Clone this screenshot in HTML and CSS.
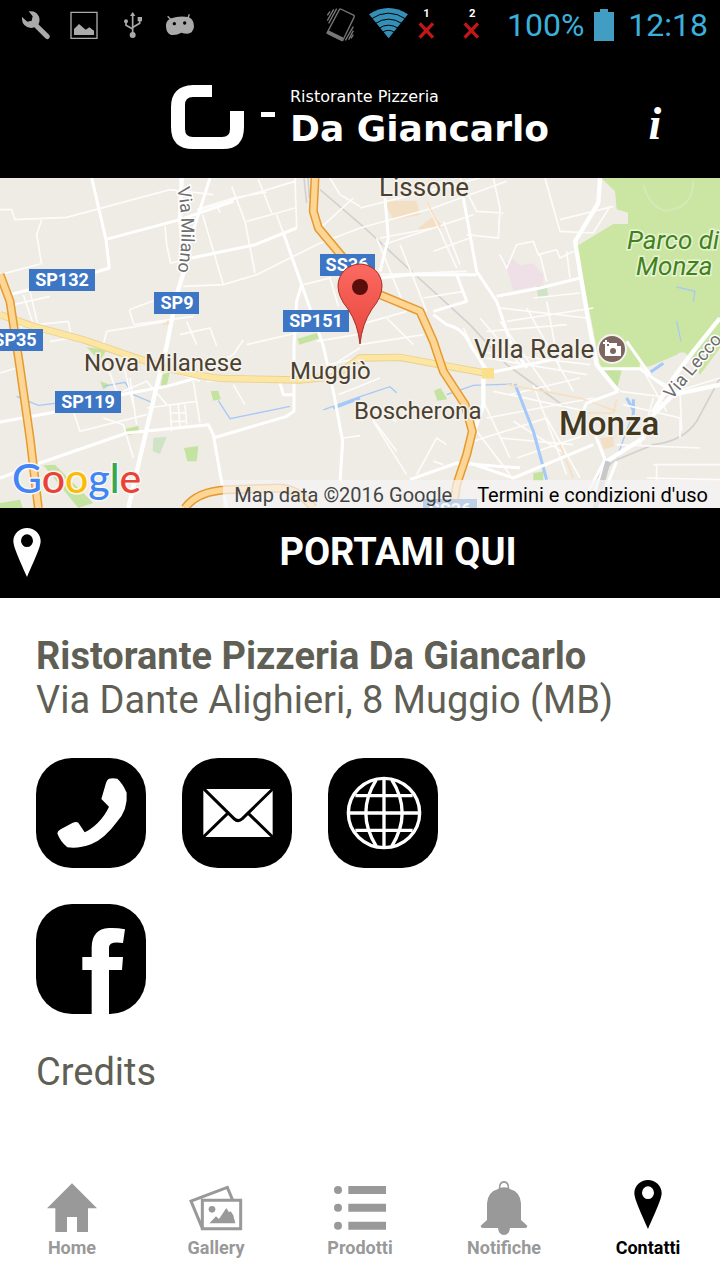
FILE: index.html
```html
<!DOCTYPE html>
<html lang="it">
<head>
    <meta charset="UTF-8">
    <meta name="viewport" content="width=device-width, initial-scale=1.0">
    <title>Da Giancarlo - Contatti</title>
    <link rel="stylesheet" href="styles.css">
</head>
<body>
    <div class="status-bar">
        <div class="status-icons">
            <svg class="status-left" viewBox="36 0 144 150">
                <path d="M86 34Q108 31 117 50Q121 63 115 73L148 105Q152 112 145 117Q138 119 133 112L103 82Q86 88 73 75Q65 66 66 51L82 65L95 62L98 49Z"/>
            </svg>
            <svg class="status-left" viewBox="180 0 144 150">
                <path d="M213 37H291V115H213Z" fill="none" stroke="#aaa" stroke-width="4"/>
                <path d="M222 105V87L237 72L257 89L268 82L282 92V105Z"/>
            </svg>
            <svg class="status-left" viewBox="324 0 144 150">
                <path d="M398 40V105M378 66V76L397 86M419 58V70L399 82" fill="none" stroke="#aaa" stroke-width="5"/>
                <path d="M398 36L406 48H390ZM413 51H426V64H413Z"/>
                <circle cx="378" cy="64" r="6"/>
                <circle cx="398" cy="105" r="9"/>
            </svg>
            <svg class="status-left" viewBox="468 0 144 150">
                <path d="M503 49L513 59M568 43L563 56" fill="none" stroke="#aaa" stroke-width="4"/>
                <path d="M498 80Q497 60 514 55Q540 46 567 52Q582 60 582 80Q580 98 563 101Q552 101 544 98Q530 107 514 105Q499 100 498 80Z"/>
                <circle cx="523" cy="71" r="5" fill="#000"/>
                <circle cx="554" cy="69" r="5" fill="#000"/>
            </svg>
        </div>
        <div class="status-icons">
            <svg class="status-right" viewBox="27 0 135 150">
                <path d="M92 27L132 46Q134 48 132 52L98 122L51 99L88 29Q90 26 92 27Z" fill="none" stroke="#777" stroke-width="4"/>
                <path d="M55 91L101 113L96 124L50 101Z" fill="#777"/>
                <path d="M60 34L52 46M71 28L52 62M80 26L56 70M130 80L106 121M130 92L116 119M130 104L123 115" fill="none" stroke="#777" stroke-width="4"/>
            </svg>
            <svg class="status-right" viewBox="162 0 135 150">
                <path d="M177 43Q235 5 294 43L236 115Z" fill="#3590b8"/>
                <path d="M183 57Q235 22 288 57M195 71Q235 44 277 71M207 85Q235 66 265 85M217 97Q235 85 254 97" fill="none" stroke="#000" stroke-width="3"/>
            </svg>
            <svg class="status-right" viewBox="297 0 135 150">
                <text x="340" y="50" class="sim">1</text>
                <path d="M329 70L369 113M369 70L329 113" class="no-signal"/>
            </svg>
            <svg class="status-right" viewBox="432 0 135 150">
                <text x="477" y="50" class="sim">2</text>
                <path d="M464 70L504 113M504 70L464 113" class="no-signal"/>
            </svg>
            <span class="battery-text">100%</span>
            <svg class="battery" viewBox="0 0 20 32">
                <path d="M6 0H14V3H20V32H0V3H6Z"/>
            </svg>
            <span class="clock">12:18</span>
        </div>
    </div>

    <header class="header">
        <div class="logo">
            <svg class="logo-mark" viewBox="0 0 105 64">
                <path d="M41 0H22Q0 1 0 22V42Q0 64 22 64H52Q73 64 73 42V26H59V44Q59 52 51 52H22Q14 52 14 44V20Q14 12 22 12H41Z"/>
                <path d="M90 27H104V32H90Z"/>
            </svg>
            <div class="logo-text">
                <span class="logo-small">Ristorante Pizzeria</span>
                <span class="logo-name">Da Giancarlo</span>
            </div>
        </div>
        <button class="info-button" type="button" aria-label="Info">i</button>
    </header>

    <main>
        <div class="map">
            <svg class="map-canvas" viewBox="0 0 720 330" preserveAspectRatio="xMidYMid slice">
                <!-- Terrain and roads are drawn at three times the map scale -->
                <g transform="scale(.33333)">
                    <!-- Parks and areas -->
                    <path d="M1804 0H2160V510L2100 590Q2060 500 2030 530L1950 565L1860 575L1850 630L1800 560L1730 205L1840 138H1884V104L1850 94L1845 40Z" class="park"/>
                    <path d="M892 482L955 464L962 480L898 500ZM376 752L415 744L418 764L380 773ZM552 810L595 804L590 850L562 850ZM632 640L655 638L662 664L640 668ZM1302 638L1322 630L1342 664L1312 668ZM130 862L165 860L280 975L235 990ZM488 590L510 580L500 625L482 630ZM260 508L320 515L300 550ZM0 975L60 965L68 990H0ZM300 610L330 620L310 635ZM1600 886L1630 880L1630 910H1600ZM1800 576L1866 574L1852 628Z" class="green"/>
                    <path d="M460 780L500 776L480 828L458 820ZM1610 325L1640 322L1645 355L1614 362Z" class="green-pale"/>
                    <path d="M1516 255L1540 243L1560 262L1600 256L1630 290L1630 320L1540 338Z" class="pink"/>
                    <path d="M1150 70L1250 68L1260 110L1180 125ZM1255 150L1300 115L1330 145L1260 162ZM1800 780L1840 775L1842 805L1812 815ZM490 425H510V440H490Z" class="town"/>
                    <path d="M1930 20Q1950 90 2000 98Q2080 90 2080 10" class="park-path"/>

                    <!-- Water -->
                    <path d="M50 655L115 682L200 672M310 625L375 613L400 650L460 675M655 668L690 722L870 685M970 696L1080 656L1170 626L1190 644M1340 650L1420 622L1535 618" class="water-thin"/>
                    <path d="M1000 690L1080 660M1880 660L1902 700M1900 664L1900 710M1952 582L1990 556" class="water"/>
                    <path d="M2030 327L2085 340L2080 370M2030 430L2043 490M1905 690L1850 840" class="water-thin"/>

                    <!-- Railways -->
                    <path d="M960 35L1088 144L1240 285L1410 440L1520 560L1700 690M2160 600L2090 730Q2050 790 1960 800L1840 850L1770 920" class="rail"/>
                    <path d="M912 0L920 75M924 0L928 60" class="rail"/>

                    <!-- Minor streets -->
                    <g class="street">
                        <path d="M0 95H35L45 125L200 118L510 35L640 50M125 125L110 170L125 260M0 290L120 258M495 145L500 200L512 256L575 240M608 110L670 320L550 325M670 320L770 290L950 200L1080 150"/>
                        <path d="M695 25L735 130L765 285M775 5L815 105M590 95L700 60L800 42M740 130L885 90M600 95L885 10M885 0L890 150M650 80L660 105M830 110L850 165"/>
                        <path d="M388 395L460 368M388 395L402 440L580 415M320 460L310 500L400 560M320 460L500 430M560 430L590 500M540 470L630 450L650 504M620 610L750 595M40 380L150 355M90 340L120 470M70 350L105 455M60 445L205 430L215 480L150 490"/>
                        <path d="M0 585L50 570M220 700L240 760L440 710M370 560L405 700M390 600L410 740M370 640L440 610L500 680M320 560L350 640M310 720L370 740L400 840M430 550L600 610M580 610L600 735M510 680L515 760M535 680L540 750M555 680L560 740M440 690L590 670M510 705H555M510 730H555M700 620L735 680M640 560L700 530L730 486"/>
                        <path d="M910 320L990 300L1015 385M985 560L1080 540M1000 560L1080 510M1015 650L1140 600M1030 780L1080 773M740 500L890 465M950 490L1070 470M990 0L1020 50L1080 85M950 160L1060 60"/>
                        <path d="M1080 90L1240 50L1440 0M1080 150L1300 90L1520 10M1150 200L1420 110M1140 180L1300 150M1280 70L1370 270M1200 200L1280 400M1130 180L1220 400M1380 0L1430 100L1510 105M1480 0L1500 90L1495 180L1400 170M1330 130L1380 260M1410 180L1300 220M1140 290L1400 280M1270 360L1390 340"/>
                        <path d="M1500 230L1520 270L1550 200L1600 190L1615 230L1670 215L1680 240L1720 220M1635 0L1680 160L1780 165L1830 85M1680 125L1840 85M1620 230L1640 310M1700 220L1710 300M1600 360L1740 345M1500 390L1760 420M1520 430L1780 390"/>
                        <path d="M1080 440L1220 400M1080 500L1270 470M1160 420L1240 500M1390 450L1460 590M1440 420L1560 560M1500 430L1650 640M1580 390L1720 640M1640 370L1680 580M1460 460L1700 440M1430 520L1770 560M1460 540L1760 590"/>
                        <path d="M1480 640L1760 700M1460 720L1780 660M1420 790L1640 720M1400 720L1530 890M1450 670L1530 840M1600 620L1700 890M1640 720L1740 900M1540 730L1700 830M1530 650L1740 600M1500 780L1720 800M1550 840L1760 770M1100 700L1190 820M1120 730L1220 890M1250 890L1310 780L1340 800M1300 850L1330 860M1080 680L1190 730"/>
                        <path d="M1860 640L1980 655L2160 600M1870 680L2040 720V780M1960 660L1920 800M1960 860H2160M1970 860V910M1940 900L2160 905M1920 560L2000 700M2040 640L2045 760M1960 600L2000 620M1850 800L2100 810"/>
                    </g>
                    <path d="M1545 618L1600 760L1640 905" class="water"/>
                    <path d="M1520 620L1740 660L1850 700M1850 665L1840 705H1750M1280 70L1320 150M1680 800L1720 900" class="street-orange"/>

                    <!-- Main streets -->
                    <g class="road">
                        <path d="M275 0L318 185L328 270L270 288L30 350M318 184L540 125L700 70M630 0L595 110L570 190M575 240L765 200L890 150M850 165L905 320L970 504L1000 640L1028 790L1020 910M905 320L890 370L882 500V700L860 715L640 780"/>
                        <path d="M0 732L180 700L310 660L500 625L590 600M0 900L120 855L380 765L625 740L640 770L668 930L680 990M840 615L850 650H880"/>
                        <path d="M1155 60L1165 180L1140 280M1390 60L1430 280L1490 370L1530 490L1580 570M1140 300L1230 290H1430M1490 355L1620 330L1740 300M1370 290L1400 370L1300 400"/>
                        <path d="M1300 410L1340 440Q1390 450 1410 500L1450 560L1470 590M1230 905L1370 855L1560 870M1410 855L1540 900L1780 800M1460 586L1680 540M1800 572H1920L2000 630M1855 640L1760 675L1740 720M1770 730L1815 845L1760 950M1850 850L1810 950M1880 490L1950 590"/>
                    </g>
                    <path d="M545 0L540 120L555 270L530 350L500 504L465 646L385 990" class="avenue"/>
                    <path d="M1800 0L1795 75L1725 190L1760 400L1790 560L1855 640" class="avenue"/>
                    <path d="M2160 620L2020 650L1950 720L1930 780L1820 850L1780 960M2160 420L2080 520L2020 600L1960 700M1450 600L1450 680L1400 820" class="avenue"/>
                    <path d="M1824 850L1785 990" stroke="#c8c8c8" stroke-width="16" fill="none"/>

                    <!-- Yellow roads -->
                    <path d="M0 410L100 445L250 485L380 530L500 570Q620 600 680 602L900 606L1000 596L1080 540L1200 538L1460 586" class="yellow-edge"/>
                    <path d="M0 410L100 445L250 485L380 530L500 570Q620 600 680 602L900 606L1000 596L1080 540L1200 538L1460 586" class="yellow"/>
                    <path d="M1446 570H1482V602H1446Z" fill="#fbe08c"/>

                    <!-- Highways -->
                    <path d="M0 290L30 370L60 570L90 780L115 990M945 0L940 100L955 150L1030 240L1100 330L1140 350L1260 400L1300 490L1330 580L1395 680L1417 760L1400 830L1370 920L1360 990M555 990Q590 940 680 935L840 930Q900 935 940 990" class="highway-edge"/>
                    <path d="M0 290L30 370L60 570L90 780L115 990M945 0L940 100L955 150L1030 240L1100 330L1140 350L1260 400L1300 490L1330 580L1395 680L1417 760L1400 830L1370 920L1360 990M555 990Q590 940 680 935L840 930Q900 935 940 990" class="highway"/>
                </g>

                <!-- Road labels -->
                <g class="shield">
                    <rect x="29" y="91" width="66" height="22"/>
                    <text x="62" y="108">SP132</text>
                    <rect x="154" y="114" width="45" height="22"/>
                    <text x="177" y="131">SP9</text>
                    <rect x="283" y="132" width="66" height="22"/>
                    <text x="316" y="149">SP151</text>
                    <rect x="-13" y="151" width="56" height="22"/>
                    <text x="15" y="168">SP35</text>
                    <rect x="55" y="213" width="66" height="22"/>
                    <text x="88" y="230">SP119</text>
                    <rect x="320" y="76" width="55" height="22"/>
                    <text x="347" y="93">SS36</text>
                    <rect x="423" y="321" width="54" height="22"/>
                    <text x="450" y="338">SS36</text>
                </g>
                <path id="via-milano" d="M177 10Q186 50 177 98" fill="none"/>
                <text class="street-name"><textPath href="#via-milano">Via Milano</textPath></text>
                <text class="street-name" transform="translate(672 222) rotate(-50)">Via Lecco</text>

                <!-- Towns -->
                <g class="place">
                    <text x="84" y="193">Nova Milanese</text>
                    <text x="290" y="201">Muggiò</text>
                    <text x="354" y="241">Boscherona</text>
                </g>
                <g class="place place-large">
                    <text x="379" y="18">Lissone</text>
                    <text x="474" y="180">Villa Reale</text>
                </g>
                <text x="559" y="257" class="city">Monza</text>
                <text x="627" y="71" class="park-name">Parco di</text>
                <text x="636" y="97" class="park-name">Monza</text>

                <circle cx="612" cy="171" r="14" fill="#7d6560" stroke="#f5f3ee" stroke-width="2"/>
                <path d="M605 168H609V165H617V168H621V178H605Z" fill="#fff"/>
                <circle cx="613" cy="173" r="3" fill="#7d6560"/>
                <path d="M603 165H609M606 162V168" stroke="#fff" stroke-width="2"/>

                <!-- Marker -->
                <defs>
                    <linearGradient id="marker-fill" x1="0" y1="0" x2="0" y2="1">
                        <stop offset="0" stop-color="#fb6a61"/>
                        <stop offset="1" stop-color="#e8453c"/>
                    </linearGradient>
                </defs>
                <path d="M360 166Q358 146 348 131Q338 119 338 108A22 22 0 0 1 382 108Q382 119 372 131Q362 146 360 166Z" fill="url(#marker-fill)" stroke="#a52d27" stroke-width="1"/>
                <circle cx="360" cy="109" r="8" fill="#590e0b"/>

                <text x="12" y="315" class="google"><tspan fill="#4285f4">G</tspan><tspan fill="#ea4335">o</tspan><tspan fill="#fbbc05">o</tspan><tspan fill="#4285f4">g</tspan><tspan fill="#34a853">l</tspan><tspan fill="#ea4335">e</tspan></text>
            </svg>
            <div class="map-credits">
                <span>Map data ©2016 Google</span>
                <a href="#termini">Termini e condizioni d'uso</a>
            </div>
        </div>

        <button class="route-button" type="button">
            <svg class="route-pin" viewBox="822 60 84 147">
                <path d="M864 60C842 60 823 77 823 100C824 117 835 142 864 207C893 142 904 117 905 100C905 77 886 60 864 60ZM864 79A18 19 0 1 1 864 117A18 19 0 1 1 864 79Z" fill-rule="evenodd"/>
            </svg>
            <span class="route-label">PORTAMI QUI</span>
        </button>

        <section class="contact">
            <h1>Ristorante Pizzeria Da Giancarlo</h1>
            <p class="address">Via Dante Alighieri, 8 Muggio (MB)</p>
            <div class="tiles">
                <a class="tile" href="#telefono" aria-label="Telefono">
                    <svg viewBox="18 24 330 330">
                        <path d="M237 86Q248 83 262 86Q278 100 290 128Q294 180 261 215Q225 265 183 283Q145 297 112 292Q90 274 82 250Q83 242 92 238L127 219Q138 213 145 218L164 247Q182 239 203 219Q226 195 237 170L214 147L228 99Q231 89 237 86Z"/>
                    </svg>
                </a>
                <a class="tile" href="#email" aria-label="Email">
                    <svg viewBox="456 24 330 330">
                        <path d="M520 117H728V261H520Z"/>
                        <path d="M520 115L612 206Q624 218 637 206L728 117M520 261L593 190M728 261L655 190" fill="none" stroke="#000" stroke-width="9"/>
                    </svg>
                </a>
                <a class="tile" href="#web" aria-label="Sito web">
                    <svg viewBox="894 24 330 330">
                        <g fill="none" stroke="#fff" stroke-width="10">
                            <ellipse cx="1062" cy="189" rx="107" ry="104"/>
                            <path d="M1062 85V293M955 189H1169M976 137H1148M976 241H1148M1039 89Q976 189 1039 289M1085 89Q1148 189 1085 289"/>
                        </g>
                    </svg>
                </a>
                <a class="tile" href="#facebook" aria-label="Facebook">
                    <svg viewBox="18 27 330 330">
                        <path d="M185 357V225H157V186H185V158Q185 102 237 99Q262 98 285 103L279 144Q236 138 237 158V186H279L276 225H237V357Z"/>
                    </svg>
                </a>
            </div>
            <a class="credits" href="#credits">Credits</a>
        </section>
    </main>

    <nav class="tab-bar">
        <a class="tab" href="#home">
            <svg viewBox="126 60 180 165">
                <path d="M216 70L291 145H264V216H231V171H201V216H166V145H141Z"/>
            </svg>
            Home
        </a>
        <a class="tab" href="#gallery">
            <svg viewBox="558 60 180 165">
                <path d="M607 205L573 123L682 82L697 118M607 121H722V206H607Z" fill="none" stroke="#999" stroke-width="9"/>
                <circle cx="636" cy="148" r="10"/>
                <path d="M628 190L648 169L657 177L679 144L687 157L692 154L700 166L706 190Z"/>
            </svg>
            Gallery
        </a>
        <a class="tab" href="#prodotti">
            <svg viewBox="990 60 180 165">
                <circle cx="1014" cy="90" r="12"/>
                <circle cx="1014" cy="143" r="12"/>
                <circle cx="1014" cy="197" r="12"/>
                <path d="M1045 78H1158V102H1045ZM1045 131H1158V155H1045ZM1045 185H1158V209H1045Z"/>
            </svg>
            Prodotti
        </a>
        <a class="tab" href="#notifiche">
            <svg viewBox="342 60 180 165">
                <path d="M381 180V130Q383 95 416 86Q416 63 432 63Q448 63 448 86Q481 95 483 130V180L502 197Q502 204 496 204H450Q448 225 432 225Q416 225 414 204H368Q362 204 362 197ZM421 83Q432 81 443 83Q443 69 432 68Q421 69 421 83Z" fill-rule="evenodd"/>
            </svg>
            Notifiche
        </a>
        <a class="tab active" href="#contatti">
            <svg viewBox="774 60 180 165">
                <path d="M864 60C842 60 823 77 823 100C824 117 835 142 864 207C893 142 904 117 905 100C905 77 886 60 864 60ZM864 79A18 19 0 1 1 864 117A18 19 0 1 1 864 79Z" fill-rule="evenodd"/>
            </svg>
            Contatti
        </a>
    </nav>
</body>
</html>
```
FILE: styles.css
```css
* {
    box-sizing: border-box;
}
body {
    margin: 0;
    min-height: 100vh;
    display: flex;
    flex-direction: column;
    font-family: Roboto, sans-serif;
    background-color: #fff;
    color: #5f5f55;
}
a {
    color: inherit;
    text-decoration: none;
}
button {
    border: 0;
    font-family: inherit;
    cursor: pointer;
}
main {
    flex: 1;
}

/* Status bar */
.status-bar {
    display: flex;
    justify-content: space-between;
    height: 50px;
    padding: 0 12px;
    background-color: #000;
    color: #3bb0dc;
    font-size: 32px;
}
.status-icons {
    display: flex;
    align-items: center;
}
.status-left {
    width: 48px;
    height: 50px;
    fill: #aaa;
}
.status-right {
    width: 45px;
    height: 50px;
}
.sim {
    font-size: 34px;
    font-weight: bold;
    text-anchor: start;
    fill: #fff;
}
.no-signal {
    stroke: #c01818;
    stroke-width: 10;
}
.battery-text {
    margin-left: 8px;
}
.battery {
    width: 20px;
    height: 32px;
    margin: 0 14px 0 10px;
    fill: #429dc2;
}

/* Header */
.header {
    display: grid;
    grid-template-columns: 1fr auto 1fr;
    align-items: center;
    height: 128px;
    padding-top: 5px;
    background-color: #000;
    color: #fff;
}
.logo {
    grid-column: 2;
    display: flex;
    align-items: center;
    gap: 14px;
}
.logo-mark {
    width: 105px;
    height: 64px;
    fill: #fff;
}
.logo-text {
    display: flex;
    flex-direction: column;
    gap: 4px;
    font-family: "DejaVu Sans", sans-serif;
}
.logo-small {
    font-size: 16px;
    line-height: 20px;
}
.logo-name {
    font-size: 36px;
    font-weight: bold;
    line-height: 36px;
}
.info-button {
    justify-self: end;
    width: 50px;
    margin-right: 40px;
    padding: 14px 0 0;
    background: none;
    color: #fff;
    font-family: "Liberation Serif", serif;
    font-size: 46px;
    font-weight: bold;
    font-style: italic;
}

/* Map */
.map {
    position: relative;
    height: 330px;
    background-color: #efece5;
    overflow: hidden;
}
.map-canvas {
    display: block;
    width: 100%;
    height: 100%;
}
.park {
    fill: #cbe6a3;
}
.green {
    fill: #c5e3a0;
}
.green-pale {
    fill: #cfe3c6;
}
.pink {
    fill: #eee0e6;
}
.town {
    fill: #f3e0c4;
}
.park-path {
    fill: none;
    stroke: #d3e9b6;
    stroke-width: 6;
}
.water {
    fill: none;
    stroke: #a3c9fb;
    stroke-width: 9;
}
.water-thin {
    fill: none;
    stroke: #a9c8f5;
    stroke-width: 4;
}
.rail {
    fill: none;
    stroke: #d2d1cf;
    stroke-width: 5;
}
.street {
    fill: none;
    stroke: #fdfcfb;
    stroke-width: 5;
}
.street-orange {
    fill: none;
    stroke: #f7dfc0;
    stroke-width: 5;
}
.road {
    fill: none;
    stroke: #fff;
    stroke-width: 9;
    stroke-linejoin: round;
}
.avenue {
    fill: none;
    stroke: #fff;
    stroke-width: 13;
    stroke-linejoin: round;
}
.yellow-edge {
    fill: none;
    stroke: #e9cf93;
    stroke-width: 22;
}
.yellow {
    fill: none;
    stroke: #fde5a2;
    stroke-width: 17;
}
.highway-edge {
    fill: none;
    stroke: #e59a2e;
    stroke-width: 27;
    stroke-linejoin: round;
}
.highway {
    fill: none;
    stroke: #fdd595;
    stroke-width: 18;
    stroke-linejoin: round;
}
.shield rect {
    fill: #3d76c4;
}
.shield text {
    font-size: 18px;
    font-weight: bold;
    fill: #fff;
    text-anchor: middle;
}
.street-name {
    font-size: 18px;
    fill: #6d6d6d;
    stroke: #fff;
    stroke-width: 3px;
    paint-order: stroke;
}
.place {
    font-size: 24px;
    fill: #4c4130;
    stroke: #f5f3ee;
    stroke-width: 3px;
    paint-order: stroke;
}
.place-large {
    font-size: 26px;
}
.city {
    font-size: 33px;
    font-weight: 500;
    fill: #42371f;
    stroke: #f5f3ee;
    stroke-width: 3px;
    paint-order: stroke;
}
.park-name {
    font-size: 26px;
    font-style: italic;
    fill: #43821a;
    stroke: #e8f4d8;
    stroke-width: 3px;
    paint-order: stroke;
}
.google {
    font-family: Lato, sans-serif;
    font-size: 41px;
    font-weight: 500;
    stroke: #f8f7f4;
    stroke-width: 3px;
    paint-order: stroke;
}
.map-credits {
    position: absolute;
    right: 0;
    bottom: 0;
    display: flex;
    gap: 25px;
    padding: 3px 12px 1px 11px;
    background-color: rgba(245, 245, 245, 0.7);
    color: #444;
    font-size: 20px;
    line-height: 24px;
}
.map-credits a {
    color: #000;
}

/* Directions button */
.route-button {
    display: flex;
    align-items: center;
    width: 100%;
    height: 90px;
    padding: 0 0 2px 13px;
    background-color: #000;
    color: #fff;
}
.route-pin {
    width: 28px;
    height: 49px;
    margin-right: 35px;
    fill: #fff;
}
.route-label {
    flex: 1;
    font-size: 38px;
    font-weight: bold;
    line-height: 44px;
}

/* Contact details */
.contact {
    padding: 36px;
    font-size: 38px;
    line-height: 44px;
}
.contact h1 {
    margin: 0;
    font-size: 38px;
}
.address {
    margin: 0;
}
.tiles {
    display: flex;
    flex-wrap: wrap;
    gap: 36px;
    max-width: 438px;
    margin: 36px 0;
}
.tile {
    width: 110px;
    height: 110px;
    border-radius: 36px;
    background-color: #000;
    overflow: hidden;
}
.tile svg {
    display: block;
    fill: #fff;
}

/* Bottom tabs */
.tab-bar {
    display: grid;
    grid-template-columns: repeat(5, 1fr);
    padding-bottom: 20px;
}
.tab {
    display: flex;
    flex-direction: column;
    align-items: center;
    color: #999;
    font-size: 18px;
    font-weight: bold;
    line-height: 25px;
}
.tab svg {
    width: 60px;
    height: 55px;
    fill: currentColor;
}
.tab.active {
    color: #000;
}
```
